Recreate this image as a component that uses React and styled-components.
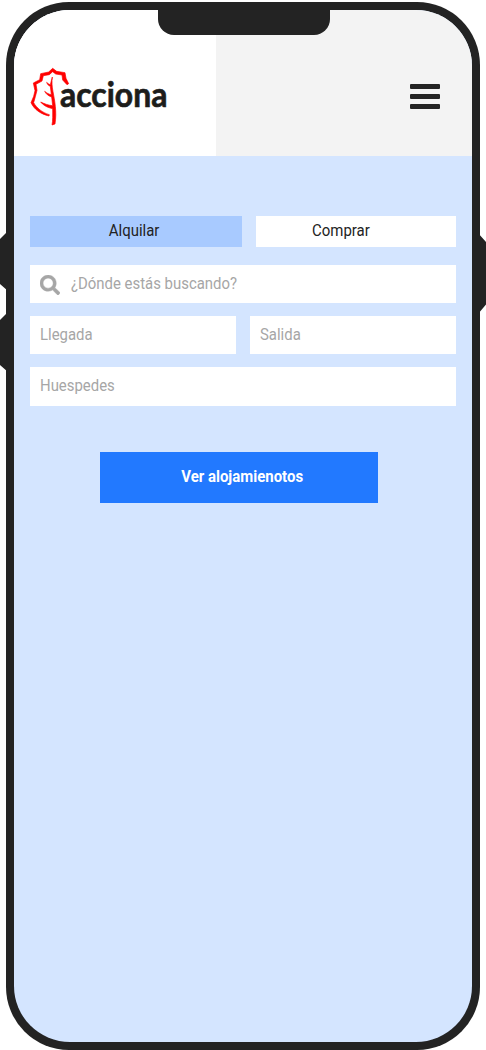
import React from "react";
import styled, { createGlobalStyle } from "styled-components";

const GlobalStyle = createGlobalStyle`
  * { box-sizing: border-box; }
  html, body { margin: 0; background: #fff; overflow: hidden; }
  button, input { font: inherit; border: 0; border-radius: 0; margin: 0; outline: 0; }
`;

const Stage = styled.div`
  position: relative;
  width: 486px;
  height: 1050px;
  padding: 1.5px 6.2px 0 6px;
  overflow: hidden;
  font-family: Roboto, sans-serif;
  font-size: 16px;
  color: #232323;
`;

const SideKeys = styled.svg`
  position: absolute;
  inset: 0;
  fill: #232323;
`;

const Phone = styled.div`
  position: relative;
  width: 473.8px;
  height: 1048.5px;
  padding: 8px;
  border-radius: 63px;
  background: #232323;
`;

const Screen = styled.div`
  height: 100%;
  display: flex;
  flex-direction: column;
  border-radius: 56px;
  overflow: hidden;
  background: #d4e5ff;
`;

const Notch = styled.div`
  position: absolute;
  top: 7px;
  left: 152px;
  width: 172px;
  height: 26.8px;
  border-radius: 0 0 16px 16px;
  background: #232323;
`;

const Header = styled.header`
  display: flex;
  height: 146.5px;
  flex: none;
  background: #f3f3f3;
`;

const Brand = styled.div`
  width: 202px;
  padding: 50.5px 0 0 6px;
  background: #fff;
`;

const Logo = styled.svg`
  display: block;
  width: 160px;
  height: 72px;
`;

const MenuButton = styled.button`
  display: flex;
  flex-direction: column;
  gap: 5px;
  width: 30px;
  height: 25px;
  margin: 74.7px 32px 0 auto;
  padding: 0;
  background: none;
`;

const MenuBar = styled.span`
  height: 4.8px;
  border-radius: 1px;
  background: #232323;
`;

const Search = styled.form`
  display: flex;
  flex-direction: column;
  padding: 60px 16px 0;
`;

const Tabs = styled.div`
  display: flex;
  gap: 13.5px;
  margin-bottom: 18px;
`;

const Tab = styled.button`
  width: ${(p) => (p.$active ? "212.5px" : "200px")};
  height: 30.7px;
  padding: 0 ${(p) => (p.$active ? "3.5px" : "29.5px")} 1px 0;
  color: #232323;
  background: ${(p) => (p.$active ? "#a8caff" : "#fff")};
`;

const Narrow = styled.span`
  display: inline-block;
  transform: scaleX(0.935);
`;

const Fields = styled.div`
  display: grid;
  grid-template-columns: repeat(2, minmax(0, 1fr));
  gap: 13px 13.6px;
`;

const Field = styled.label`
  display: flex;
  align-items: center;
  gap: 11px;
  height: 38.3px;
  padding: 0 10px;
  background: #fff;
  grid-column: ${(p) => (p.$wide ? "1 / -1" : "auto")};
`;

const Input = styled.input`
  flex: 1;
  min-width: 0;
  padding: 0 0 1px;
  background: none;
  transform: scaleX(0.932);
  transform-origin: left;
  &::placeholder { color: #a6a6a6; opacity: 1; }
`;

const SearchIcon = styled.svg`
  flex: none;
  width: 20px;
  height: 20px;
  margin-top: 3px;
  fill: #a6a6a6;
  stroke: #a6a6a6;
  stroke-width: 10;
`;

const Submit = styled.button`
  width: 278.5px;
  height: 51px;
  margin: 46.3px 0 0 69.5px;
  padding: 0 0 1px 7px;
  font-weight: 700;
  color: #fff;
  background: #2279ff;
`;

function AccionaLogo() {
  return (
    <Logo viewBox="0 0 480 216" role="img" aria-label="acciona">
      <g fill="#f00" stroke="#f00" strokeWidth="2">
        <path d="M98 25 L110 34 L135 38 L138 55 L146 71 L141 74 L128 60 L126 45 L107 42 L98 35 L88 44 L70 47 L66 63 L48 73 L51 91 L46 110 L41 128 C50 144 67 158 88 164 L87 168 C62 162 43 149 33 128 L41 109 L45 92 L40 69 L59 59 L62 41 L86 36 Z" />
        <path d="M97 51 C95 65 96 80 99 95 C104 121 111 156 105 192 L96 195 C99 182 98 163 98 146 C85 143 71 138 62 126 C74 132 86 136 98 137 L95 111 C85 108 78 102 74 94 C80 99 87 103 94 104 L91 79 C86 77 82 74 80 67 C84 71 87 73 91 74 Z" />
      </g>
      <text x="120" y="141" fontFamily="Lato" fontWeight="700" fontSize="101" fill="#1d1d1b" stroke="#1d1d1b" strokeWidth="2" textLength="322" lengthAdjust="spacingAndGlyphs">acciona</text>
    </Logo>
  );
}

export default function App() {
  return (
    <>
      <GlobalStyle />
      <Stage>
        <SideKeys width="486" height="1050" viewBox="0 0 486 1050">
          <path d="M8 231 L0 239 V284 L8 291 Z M8 312 L0 320 V365 L8 372 Z M478 233 L486 242 V304.500 L478 314 Z" />
        </SideKeys>
        <Phone>
          <Screen>
            <Header>
              <Brand><AccionaLogo /></Brand>
              <MenuButton type="button" aria-label="Menú">
                <MenuBar /><MenuBar /><MenuBar />
              </MenuButton>
            </Header>
            <Search>
              <Tabs>
                <Tab type="button" $active><Narrow>Alquilar</Narrow></Tab>
                <Tab type="button"><Narrow>Comprar</Narrow></Tab>
              </Tabs>
              <Fields>
                <Field $wide>
                  <SearchIcon viewBox="0 0 512 512">
                    <path d="M505 442.700L405.300 343c-4.500-4.500-10.600-7-17-7H372c27.600-35.300 44-79.700 44-128C416 93.100 322.900 0 208 0S0 93.100 0 208s93.100 208 208 208c48.300 0 92.700-16.400 128-44v16.300c0 6.400 2.500 12.500 7 17l99.700 99.700c9.400 9.400 24.600 9.400 33.900 0l28.300-28.300c9.400-9.400 9.400-24.600.1-34zM208 336c-70.700 0-128-57.200-128-128 0-70.700 57.200-128 128-128 70.700 0 128 57.200 128 128 0 70.700-57.200 128-128 128z" />
                  </SearchIcon>
                  <Input placeholder="¿Dónde estás buscando?" />
                </Field>
                <Field><Input placeholder="Llegada" /></Field>
                <Field><Input placeholder="Salida" /></Field>
                <Field $wide><Input placeholder="Huespedes" /></Field>
              </Fields>
              <Submit type="button"><Narrow>Ver alojamienotos</Narrow></Submit>
            </Search>
          </Screen>
          <Notch />
        </Phone>
      </Stage>
    </>
  );
}
